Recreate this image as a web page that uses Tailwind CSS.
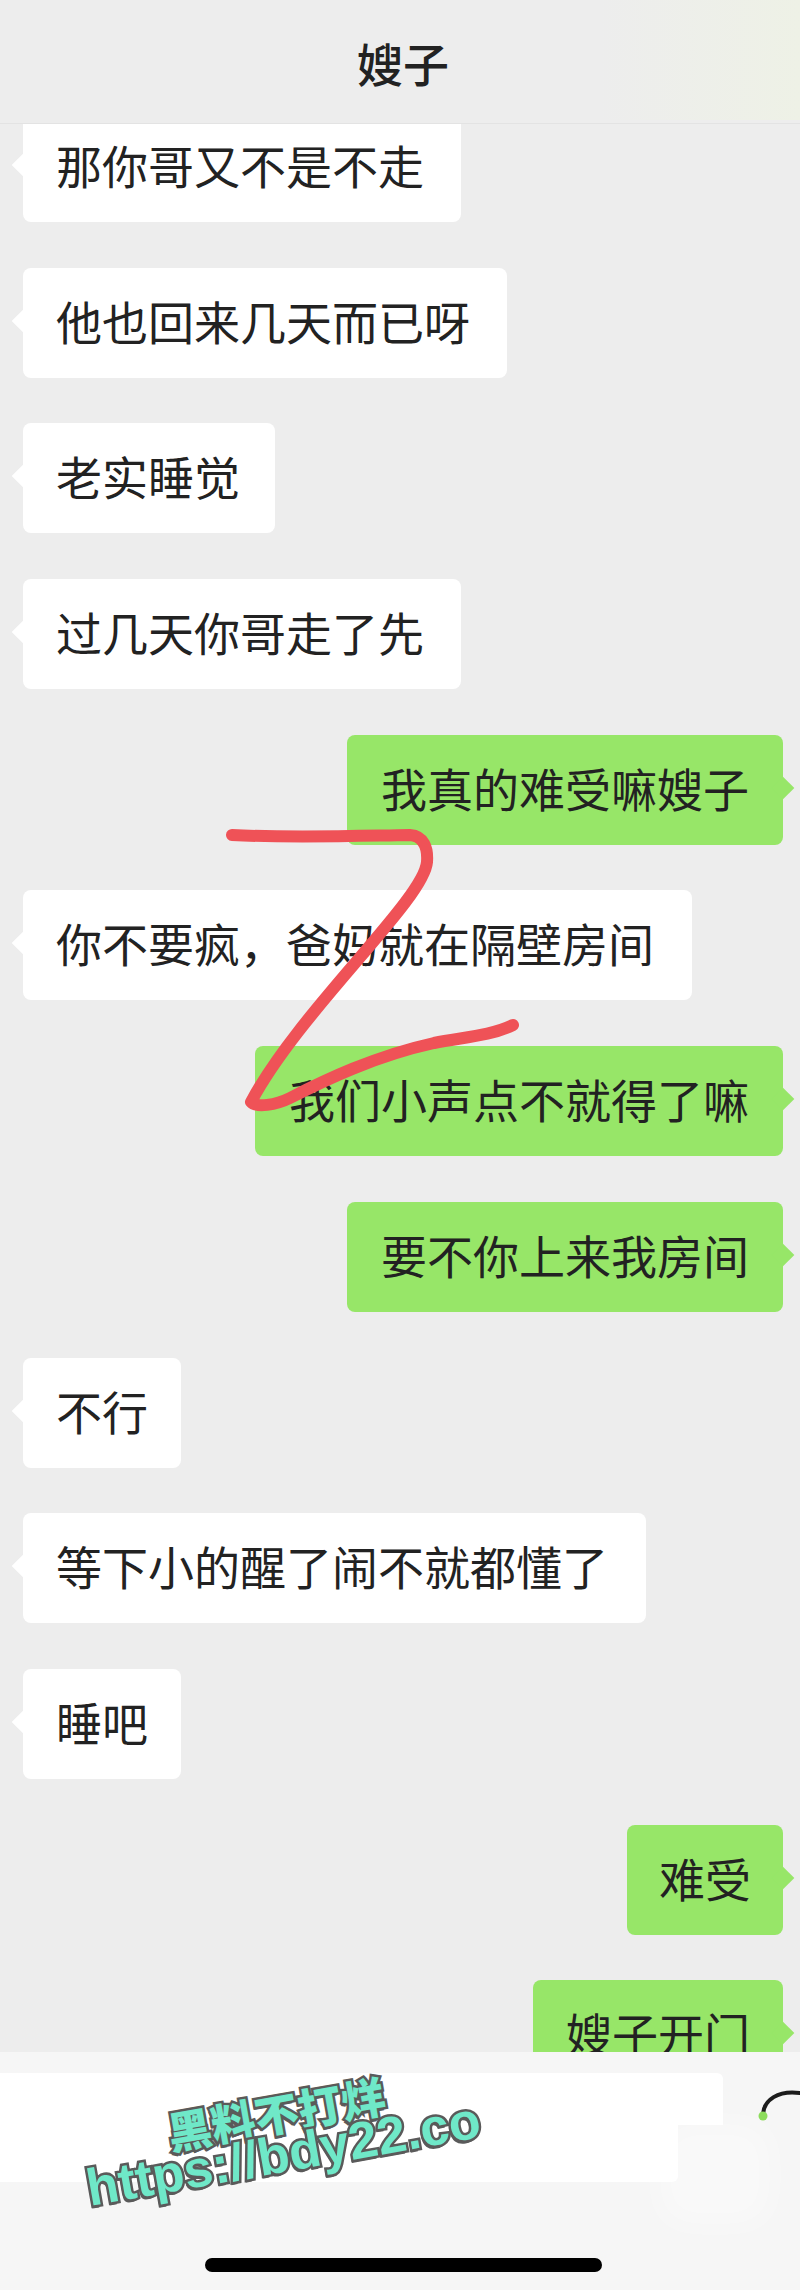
<!DOCTYPE html>
<html lang="zh-CN">
  <head>
    <meta charset="UTF-8" />
    <meta name="viewport" content="width=device-width, initial-scale=1.0" />
    <title>嫂子</title>
    <script src="https://cdn.jsdelivr.net/npm/@tailwindcss/browser@4"></script>
  </head>
  <body class="bg-[#ededed] font-['Noto_Sans_CJK_SC','Noto_Sans',sans-serif] text-[#222]">
    <div class="relative w-[800px] h-[2290px] overflow-hidden flex flex-col">
      <!-- Header -->
      <header class="relative h-[124px] shrink-0 flex items-center justify-center border-b border-[#e3e3e3] bg-[#ededed] z-10">
        <div class="absolute right-0 top-0 w-[200px] h-[120px] bg-gradient-to-l from-[#eef1e6] to-[#ededed]"></div>
        <h1 class="relative text-[46px] leading-none font-medium translate-x-[3px]">嫂子</h1>
      </header>

      <!-- Messages -->
      <main class="flex-1 overflow-hidden flex flex-col gap-[45.7px] px-[17px] [&>*]:shrink-0">
        <div class="relative self-start mt-[-12px] ml-[6px] h-[110px] flex items-center pl-[33px] pr-[37px] pb-[6px] bg-white rounded-lg text-[46px] leading-none whitespace-nowrap">
          <span class="absolute left-[-8px] top-[45px] w-[16px] h-[16px] rotate-45 bg-white"></span><span class="relative">那你哥又不是不走</span>
        </div>
        <div class="relative self-start ml-[6px] h-[110px] flex items-center pl-[33px] pr-[37px] pb-[6px] bg-white rounded-lg text-[46px] leading-none whitespace-nowrap">
          <span class="absolute left-[-8px] top-[45px] w-[16px] h-[16px] rotate-45 bg-white"></span><span class="relative">他也回来几天而已呀</span>
        </div>
        <div class="relative self-start ml-[6px] h-[110px] flex items-center pl-[33px] pr-[35px] pb-[6px] bg-white rounded-lg text-[46px] leading-none whitespace-nowrap">
          <span class="absolute left-[-8px] top-[45px] w-[16px] h-[16px] rotate-45 bg-white"></span><span class="relative">老实睡觉</span>
        </div>
        <div class="relative self-start ml-[6px] h-[110px] flex items-center pl-[33px] pr-[37px] pb-[6px] bg-white rounded-lg text-[46px] leading-none whitespace-nowrap">
          <span class="absolute left-[-8px] top-[45px] w-[16px] h-[16px] rotate-45 bg-white"></span><span class="relative">过几天你哥走了先</span>
        </div>
        <div class="relative self-end h-[110px] flex items-center px-[34px] pb-[6px] bg-[#97e668] rounded-lg text-[46px] leading-none whitespace-nowrap">
          <span class="absolute right-[-8px] top-[45px] w-[16px] h-[16px] rotate-45 bg-[#97e668]"></span><span class="relative">我真的难受嘛嫂子</span>
        </div>
        <div class="relative self-start ml-[6px] h-[110px] flex items-center pl-[33px] pr-[38px] pb-[6px] bg-white rounded-lg text-[46px] leading-none whitespace-nowrap">
          <span class="absolute left-[-8px] top-[45px] w-[16px] h-[16px] rotate-45 bg-white"></span><span class="relative">你不要疯，爸妈就在隔壁房间</span>
        </div>
        <div class="relative self-end h-[110px] flex items-center px-[34px] pb-[6px] bg-[#97e668] rounded-lg text-[46px] leading-none whitespace-nowrap">
          <span class="absolute right-[-8px] top-[45px] w-[16px] h-[16px] rotate-45 bg-[#97e668]"></span><span class="relative">我们小声点不就得了嘛</span>
        </div>
        <div class="relative self-end h-[110px] flex items-center px-[34px] pb-[6px] bg-[#97e668] rounded-lg text-[46px] leading-none whitespace-nowrap">
          <span class="absolute right-[-8px] top-[45px] w-[16px] h-[16px] rotate-45 bg-[#97e668]"></span><span class="relative">要不你上来我房间</span>
        </div>
        <div class="relative self-start ml-[6px] h-[110px] flex items-center pl-[33px] pr-[33px] pb-[6px] bg-white rounded-lg text-[46px] leading-none whitespace-nowrap">
          <span class="absolute left-[-8px] top-[45px] w-[16px] h-[16px] rotate-45 bg-white"></span><span class="relative">不行</span>
        </div>
        <div class="relative self-start ml-[6px] h-[110px] flex items-center pl-[33px] pr-[38px] pb-[6px] bg-white rounded-lg text-[46px] leading-none whitespace-nowrap">
          <span class="absolute left-[-8px] top-[45px] w-[16px] h-[16px] rotate-45 bg-white"></span><span class="relative">等下小的醒了闹不就都懂了</span>
        </div>
        <div class="relative self-start ml-[6px] h-[110px] flex items-center pl-[33px] pr-[33px] pb-[6px] bg-white rounded-lg text-[46px] leading-none whitespace-nowrap">
          <span class="absolute left-[-8px] top-[45px] w-[16px] h-[16px] rotate-45 bg-white"></span><span class="relative">睡吧</span>
        </div>
        <div class="relative self-end h-[110px] flex items-center px-[32px] pb-[6px] bg-[#97e668] rounded-lg text-[46px] leading-none whitespace-nowrap">
          <span class="absolute right-[-8px] top-[45px] w-[16px] h-[16px] rotate-45 bg-[#97e668]"></span><span class="relative">难受</span>
        </div>
        <div class="relative self-end h-[110px] flex items-center px-[33px] pb-[6px] bg-[#97e668] rounded-lg text-[46px] leading-none whitespace-nowrap">
          <span class="absolute right-[-8px] top-[45px] w-[16px] h-[16px] rotate-45 bg-[#97e668]"></span><span class="relative">嫂子开门</span>
        </div>
      </main>

      <!-- Input bar -->
      <footer class="relative h-[238px] shrink-0 bg-[#f6f6f6] pt-[21px] z-10">
        <div class="w-[723px] h-[52px] bg-white rounded-tr-md"></div>
        <div class="w-[678px] h-[57px] bg-white rounded-br-md"></div>
        <div class="absolute left-[660px] top-[72px] w-[110px] h-[100px] rounded-3xl bg-white/40 blur-lg"></div>
        <svg class="absolute right-0 top-[36px]" width="42" height="34" viewBox="0 0 42 34" fill="none">
          <path d="M5 26 C6 12 20 2 42 5" stroke="#1c1c1c" stroke-width="4" stroke-linecap="round" />
          <circle cx="5" cy="28" r="4.5" fill="#8ddc5c" />
        </svg>
        <div class="mt-[76px] mx-auto w-[397px] h-[14px] rounded-full bg-black translate-x-[3px]"></div>
      </footer>

      <!-- Red scribble -->
      <svg class="absolute left-0 top-0 z-20 pointer-events-none" width="800" height="2290" viewBox="0 0 800 2290" fill="none">
        <path d="M232 835 C290 838 350 836 410 835 C424 836 428 848 427 862 C424 900 300 1010 251 1102 C256 1108 276 1105 290 1098 C325 1080 375 1056 434 1043 C465 1037 490 1036 513 1025" stroke="#ef5257" stroke-width="12" stroke-linecap="round" stroke-linejoin="round" />
      </svg>

      <!-- Watermark -->
      <div class="absolute left-[40px] top-[2090px] w-[480px] z-30 -rotate-[10deg] flex flex-col items-center font-['Liberation_Sans','Noto_Sans_CJK_SC',sans-serif] font-bold text-[#6fe8c8] leading-none [-webkit-text-stroke:5px_#5a5a5a] [paint-order:stroke_fill] [text-shadow:-2px_3px_0_#5a5a5a]">
        <span class="text-[44px] font-['Noto_Sans_CJK_SC',sans-serif] font-black">黑料不打烊</span>
        <span class="text-[52px] mt-[-6px]">https://bdy22.co</span>
      </div>
    </div>
  </body>
</html>
